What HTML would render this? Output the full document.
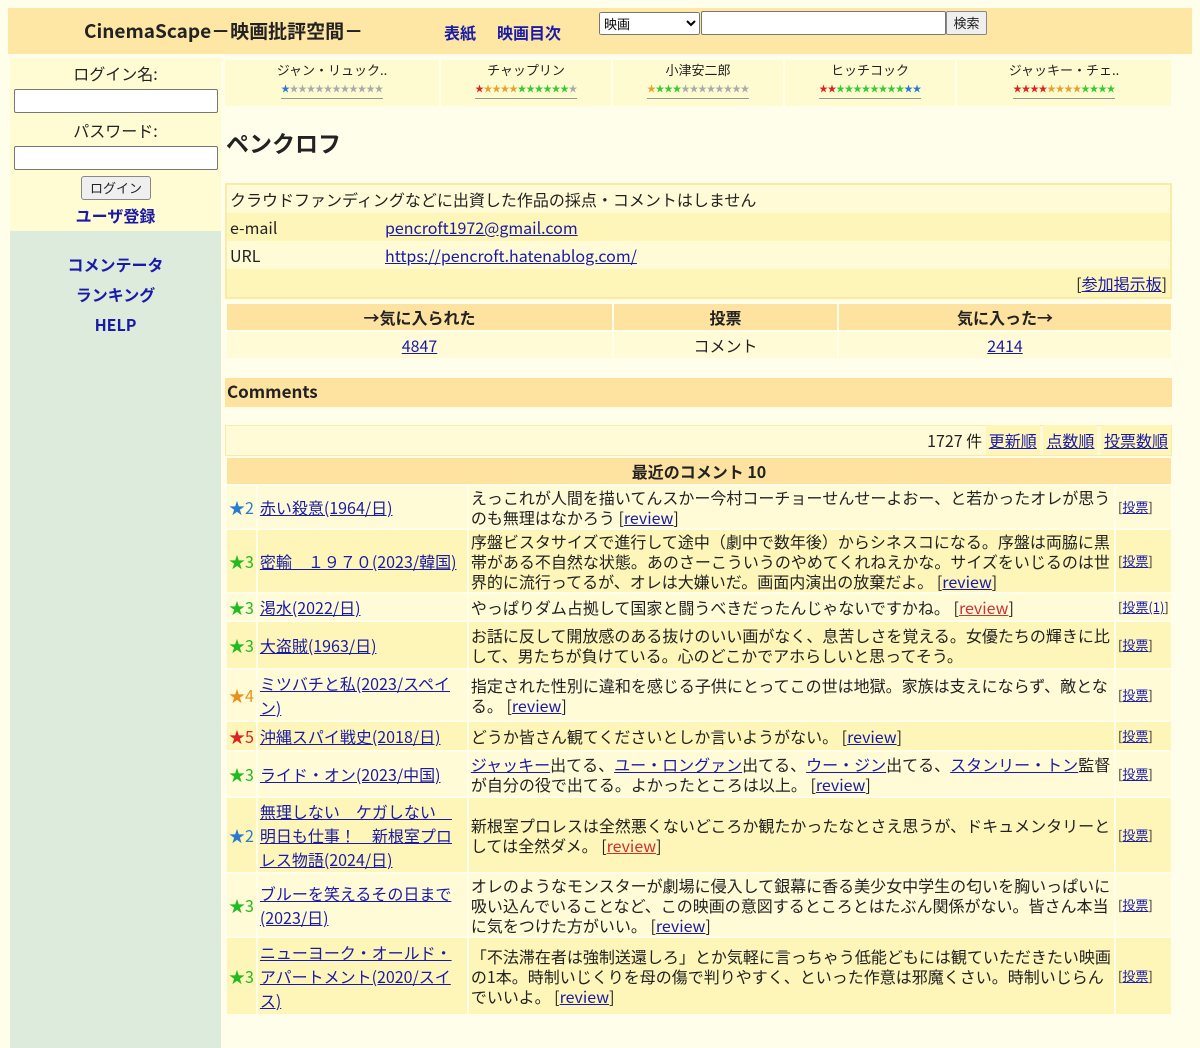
<!DOCTYPE html>
<html><head><meta charset="utf-8"><style>
*{box-sizing:border-box}
body{margin:0;width:1200px;height:1039px;background:#fffeea;font-family:"Noto Sans CJK JP",sans-serif;font-size:16px;color:#222;position:relative;overflow:hidden;line-height:1.3}
a{color:#1a1aa8}
.abs{position:absolute}
#hdr{left:8px;top:8px;width:1184px;height:46px;background:#fee6a4}
#hdr .t{left:76px;top:11px;font-size:19px;font-weight:bold;color:#222}
#hdr .n{top:14px;font-size:16px;font-weight:bold;color:#1a1aa8}
select,input,button{font-family:"Noto Sans CJK JP",sans-serif;font-size:13px}
#side{left:10px;top:58px;width:211px;height:990px;background:#dcebdc}
#login{left:10px;top:58px;width:211px;height:173px;background:#fffbd2;text-align:center}
.inp{position:absolute;left:4px;width:204px;height:24px;background:#fff;border:1px solid #777;border-radius:2px}
.sl{position:absolute;width:211px;text-align:center;font-weight:bold;color:#1a1aa8;font-size:16px}
#fav{left:225px;top:60px;width:946px;height:46px;background:#fffbd0;display:flex}
#fav div{border-right:2px solid #fffee8;text-align:center;font-size:13px;padding-top:2px}
#fav .s{font-size:9px;letter-spacing:-.5px;border-bottom:1px solid #999;display:inline-block;padding-bottom:2px;line-height:14px}
h1{position:absolute;left:226px;top:128px;margin:0;font-size:23px}
table{border-collapse:separate;border-spacing:2px;position:absolute}
#prof{left:225px;top:183px;width:947px;border:2px solid #fde9a8;background:#fffbd6;border-spacing:0}
#prof td{padding:0 3px;height:28px}
.y2{background:#fdf6b8}
#cnt td{height:26px;text-align:center}
.hd{background:#fde2a0;font-weight:bold}
#cm td{line-height:20px;padding:0 2px}
</style></head><body>
<div id="hdr" class="abs">
<div class="abs t">CinemaScape－映画批評空間－</div>
<div class="abs n" style="left:436px">表紙</div>
<div class="abs n" style="left:489px">映画目次</div>
<select class="abs" style="left:591px;top:4px;width:101px;height:23px"><option>映画</option></select>
<div class="abs" style="left:693px;top:3px;width:245px;height:24px;background:#fff;border:1px solid #777;border-radius:2px"></div>
<div class="abs" style="left:938px;top:3px;width:41px;height:24px;background:#efefef;border:1px solid #888;border-radius:2px;font-size:13px;text-align:center;line-height:22px">検索</div>
</div>
<div id="side" class="abs"></div>
<div id="login" class="abs">
<div class="abs" style="left:0;width:211px;top:5px">ログイン名:</div>
<div class="inp" style="top:31px"></div>
<div class="abs" style="left:0;width:211px;top:62px">パスワード:</div>
<div class="inp" style="top:88px"></div>
<div class="abs" style="left:71px;top:118px;width:70px;height:24px;background:#efefef;border:1px solid #888;border-radius:3px;font-size:13px;line-height:22px">ログイン</div>
<div class="sl" style="top:147px;left:0">ユーザ登録</div>
</div>
<div class="sl abs" style="left:10px;top:254px">コメンテータ</div>
<div class="sl abs" style="left:10px;top:284px">ランキング</div>
<div class="sl abs" style="left:10px;top:314px">HELP</div>
<div id="fav" class="abs">
<div style="width:216px">ジャン・リュック..<br><span class="s"><span style="color:#2a7bd0">★</span><span style="color:#aaa">★★★★★★★★★★★</span></span></div>
<div style="width:172px">チャップリン<br><span class="s"><span style="color:#d22">★</span><span style="color:#e8a030">★★★★</span><span style="color:#3c3">★★★★★★</span><span style="color:#aaa">★</span></span></div>
<div style="width:172px">小津安二郎<br><span class="s"><span style="color:#e8a030">★</span><span style="color:#3c3">★★★</span><span style="color:#aaa">★★★★★★★★</span></span></div>
<div style="width:172px">ヒッチコック<br><span class="s"><span style="color:#d22">★★</span><span style="color:#3c3">★★★★★★★★</span><span style="color:#2a7bd0">★★</span></span></div>
<div style="width:214px;border:0">ジャッキー・チェ..<br><span class="s"><span style="color:#d22">★★★★</span><span style="color:#e8a030">★★★★</span><span style="color:#3c3">★★★★</span></span></div>
</div>
<h1>ペンクロフ</h1>
<table id="prof">
<tr><td colspan="2">クラウドファンディングなどに出資した作品の採点・コメントはしません</td></tr>
<tr class="y2"><td style="width:155px">e-mail</td><td><a href="#">pencroft1972@gmail.com</a></td></tr>
<tr><td>URL</td><td><a href="#">https://pencroft.hatenablog.com/</a></td></tr>
<tr class="y2"><td colspan="2" style="text-align:right">[<a href="#">参加掲示板</a>]</td></tr>
</table>
<table id="cnt" style="left:225px;top:302px;width:948px">
<tr class="hd"><td style="width:385px">→気に入られた</td><td style="width:223px">投票</td><td>気に入った→</td></tr>
<tr style="background:#fffbd6"><td><a href="#">4847</a></td><td>コメント</td><td><a href="#">2414</a></td></tr>
</table>
<div class="abs" style="left:225px;top:378px;width:947px;height:29px;background:#fde2a0;font-weight:bold;font-size:17px;padding:2px 2px">Comments</div>
<div class="abs" style="left:225px;top:425px;width:947px;height:31px;background:#fffbd6;border:1px solid #fde9a8;text-align:right;line-height:29px;font-size:16px">1727 件 <span style="background:#fdf6b8;padding:3px 3px"><a href="#">更新順</a></span> <span style="background:#fdf6b8;padding:3px 3px"><a href="#">点数順</a></span> <span style="background:#fdf6b8;padding:3px 3px"><a href="#">投票数順</a></span></div>
<table id="cm" style="left:225px;top:456px;width:948px">
<tr class="hd"><td colspan="4" style="text-align:center;height:26px">最近のコメント 10</td></tr>
<tr style="background:#fffbd6;height:42px"><td style="width:28px;color:#2a7bd0">★2</td><td style="width:209px"><a href="#">赤い殺意(1964/日)</a></td><td>えっこれが人間を描いてんスかー今村コーチョーせんせーよおー、と若かったオレが思うのも無理はなかろう [<a href="#">review</a>]</td><td style="width:55px;font-size:13px">[<a href="#">投票</a>]</td></tr>
<tr class="y2" style="height:62px"><td style="color:#2b2">★3</td><td><a href="#">密輸　１９７０(2023/韓国)</a></td><td>序盤ビスタサイズで進行して途中（劇中で数年後）からシネスコになる。序盤は両脇に黒帯がある不自然な状態。あのさーこういうのやめてくれねえかな。サイズをいじるのは世界的に流行ってるが、オレは大嫌いだ。画面内演出の放棄だよ。 [<a href="#">review</a>]</td><td style="font-size:13px">[<a href="#">投票</a>]</td></tr>
<tr style="background:#fffbd6;height:26px"><td style="color:#2b2">★3</td><td><a href="#">渇水(2022/日)</a></td><td>やっぱりダム占拠して国家と闘うべきだったんじゃないですかね。 [<a href="#" style="color:#c33">review</a>]</td><td style="font-size:13px">[<a href="#">投票(1)</a>]</td></tr>
<tr class="y2" style="height:46px"><td style="color:#2b2">★3</td><td><a href="#">大盗賊(1963/日)</a></td><td>お話に反して開放感のある抜けのいい画がなく、息苦しさを覚える。女優たちの輝きに比して、男たちが負けている。心のどこかでアホらしいと思ってそう。</td><td style="font-size:13px">[<a href="#">投票</a>]</td></tr>
<tr style="background:#fffbd6;height:50px"><td style="color:#e8901a">★4</td><td style="line-height:24px"><a href="#">ミツバチと私(2023/スペイン)</a></td><td>指定された性別に違和を感じる子供にとってこの世は地獄。家族は支えにならず、敵となる。 [<a href="#">review</a>]</td><td style="font-size:13px">[<a href="#">投票</a>]</td></tr>
<tr class="y2" style="height:28px"><td style="color:#d22">★5</td><td><a href="#">沖縄スパイ戦史(2018/日)</a></td><td>どうか皆さん観てくださいとしか言いようがない。 [<a href="#">review</a>]</td><td style="font-size:13px">[<a href="#">投票</a>]</td></tr>
<tr style="background:#fffbd6;height:44px"><td style="color:#2b2">★3</td><td><a href="#">ライド・オン(2023/中国)</a></td><td><a href="#">ジャッキー</a>出てる、<a href="#">ユー・ロングァン</a>出てる、<a href="#">ウー・ジン</a>出てる、<a href="#">スタンリー・トン</a>監督が自分の役で出てる。よかったところは以上。 [<a href="#">review</a>]</td><td style="font-size:13px">[<a href="#">投票</a>]</td></tr>
<tr class="y2" style="height:74px"><td style="color:#2a7bd0">★2</td><td style="line-height:24px"><a href="#">無理しない　ケガしない　明日も仕事！　新根室プロレス物語(2024/日)</a></td><td>新根室プロレスは全然悪くないどころか観たかったなとさえ思うが、ドキュメンタリーとしては全然ダメ。 [<a href="#" style="color:#c33">review</a>]</td><td style="font-size:13px">[<a href="#">投票</a>]</td></tr>
<tr style="background:#fffbd6;height:62px"><td style="color:#2b2">★3</td><td style="line-height:24px"><a href="#">ブルーを笑えるその日まで(2023/日)</a></td><td>オレのようなモンスターが劇場に侵入して銀幕に香る美少女中学生の匂いを胸いっぱいに吸い込んでいることなど、この映画の意図するところとはたぶん関係がない。皆さん本当に気をつけた方がいい。 [<a href="#">review</a>]</td><td style="font-size:13px">[<a href="#">投票</a>]</td></tr>
<tr class="y2" style="height:76px"><td style="color:#2b2">★3</td><td style="line-height:24px"><a href="#">ニューヨーク・オールド・アパートメント(2020/スイス)</a></td><td>「不法滞在者は強制送還しろ」とか気軽に言っちゃう低能どもには観ていただきたい映画の1本。時制いじくりを母の傷で判りやすく、といった作意は邪魔くさい。時制いじらんでいいよ。 [<a href="#">review</a>]</td><td style="font-size:13px">[<a href="#">投票</a>]</td></tr>
</table>
</body></html>
